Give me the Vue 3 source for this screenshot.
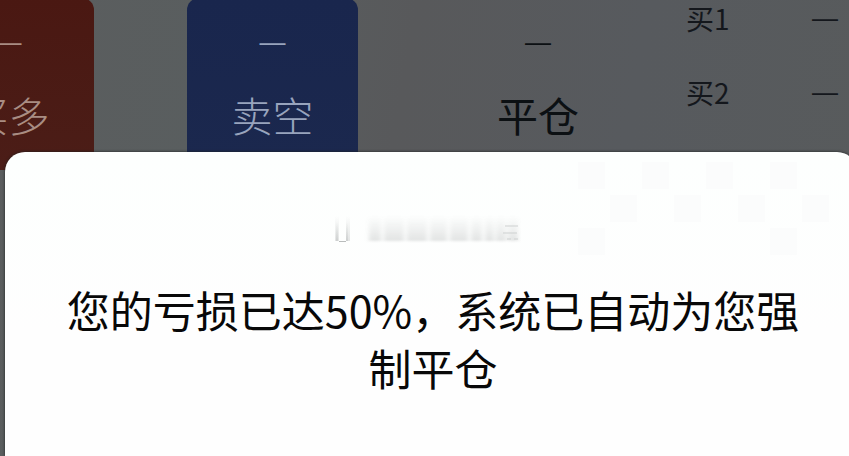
<script setup>
const actions = [
  { name: '买多', kind: 'long', value: '—' },
  { name: '卖空', kind: 'short', value: '—' },
  { name: '平仓', kind: 'close', value: '—' },
]
const bids = [
  { name: '买1', value: '—' },
  { name: '买2', value: '—' },
]
const tiles = [
  [18, 10], [82, 10], [146, 10], [210, 10],
  [50, 43], [114, 43], [178, 43], [242, 43],
  [18, 76], [210, 76],
]
</script>

<template>
  <main class="screen">
    <section class="trade">
      <div class="actions">
        <button v-for="a in actions" :key="a.kind" type="button" :class="['action', a.kind]">
          <span class="dash">{{ a.value }}</span>
          <span class="name">{{ a.name }}</span>
        </button>
      </div>
      <dl class="bids">
        <div v-for="b in bids" :key="b.name" class="bid">
          <dt>{{ b.name }}</dt>
          <dd class="dash">{{ b.value }}</dd>
        </div>
      </dl>
    </section>

    <div class="dialog" role="alertdialog" aria-describedby="notice">
      <svg class="tiles" width="289" height="110" viewBox="0 0 289 110" aria-hidden="true">
        <rect v-for="(t, i) in tiles" :key="i" :x="t[0]" :y="t[1]" width="27" height="27" fill="#fbfcfc" />
      </svg>
      <svg class="smudge" width="188" height="32" viewBox="0 0 188 32" aria-hidden="true">
        <defs>
          <linearGradient id="fade" x1="0" y1="0" x2="0" y2="1">
            <stop offset="0" stop-color="#8c9090" stop-opacity="0" />
            <stop offset="1" stop-color="#8c9090" stop-opacity="0.24" />
          </linearGradient>
          <filter id="soft" x="-10%" y="-20%" width="120%" height="140%">
            <feGaussianBlur stdDeviation="2 1" />
          </filter>
        </defs>
        <g fill="url(#fade)" filter="url(#soft)">
          <rect x="36" y="2" width="12" height="25" />
          <rect x="51" y="2" width="20" height="25" />
          <rect x="74" y="2" width="20" height="25" />
          <rect x="97" y="2" width="17" height="25" />
          <rect x="117" y="2" width="18" height="25" />
          <rect x="138" y="2" width="11" height="25" />
          <rect x="152" y="2" width="9" height="25" />
          <rect x="163" y="2" width="10" height="25" />
          <rect x="175" y="2" width="10" height="25" />
        </g>
        <g fill="url(#fade)">
          <rect x="2" y="2" width="4" height="25" />
          <rect x="3" y="8" width="2" height="19" />
          <rect x="13" y="2" width="4" height="25" />
          <rect x="13" y="8" width="2" height="19" />
        </g>
        <path d="M6 27.500h7" stroke="#b9bcbc" />
        <path d="M172 12h13M170 19h14M174 25h4M181 25h4" stroke="#cfd2d2" stroke-width="2" opacity="0.5" />
      </svg>
      <p id="notice" class="notice">您的亏损已达50%，系统已自动为您强制平仓</p>
    </div>
  </main>
</template>

<style>
body {
  margin: 0;
}
</style>

<style scoped>
.screen {
  position: relative;
  min-height: 100vh;
  overflow: hidden;
  background: linear-gradient(100deg, #5b5d5e 0%, #595e5f 25%, #58595b 45%, #575a5e 70%, #585b5c 100%);
  font-family: "Noto Sans CJK SC", sans-serif;
}

.trade {
  display: flex;
  justify-content: space-between;
}

.actions {
  display: flex;
  gap: 93px;
  margin: -2px 0 0 -77px;
}

.action {
  display: flex;
  flex-direction: column;
  align-items: center;
  gap: 36px;
  width: 171px;
  height: 172px;
  padding: 32px 0 0;
  border: 0;
  border-radius: 12px 12px 0 0;
  background: none;
  color: #0c1013;
  font: inherit;
}

.long {
  background: linear-gradient(#4a1812, #4b1d17);
  color: #a98d83;
}

.short {
  background: linear-gradient(#19264d, #1b284e);
  color: #98a4bd;
}

.close {
  width: 174px;
}

.name {
  font-size: 41px;
  font-weight: 300;
  line-height: 48px;
}

.close .name {
  font-weight: 400;
}

.dash {
  font-family: "Liberation Sans", sans-serif;
  font-size: 26px;
  line-height: 24px;
}

.bids {
  display: flex;
  flex-direction: column;
  gap: 34px;
  width: 152px;
  margin: -2px 0 0;
  padding-right: 11px;
  color: #14171c;
}

.bid {
  display: flex;
  align-items: center;
  justify-content: space-between;
}

.bid dt {
  font-size: 28px;
  line-height: 40px;
}

.bid dd {
  margin: 0;
}

.dialog {
  position: absolute;
  inset: 152px -8px 0 5px;
  box-sizing: border-box;
  padding: 128px 48px 0 52px;
  border-radius: 20px 20px 0 0;
  background: linear-gradient(#fdfffe, #fefefe 60%);
  box-shadow: 0 0 3px #1c2020;
}

.tiles {
  position: absolute;
  top: 0;
  right: 8px;
}

.smudge {
  position: absolute;
  top: 62px;
  left: 328px;
}

.notice {
  margin: 0;
  color: #080808;
  font-size: 43px;
  line-height: 58px;
  text-align: center;
}
</style>
